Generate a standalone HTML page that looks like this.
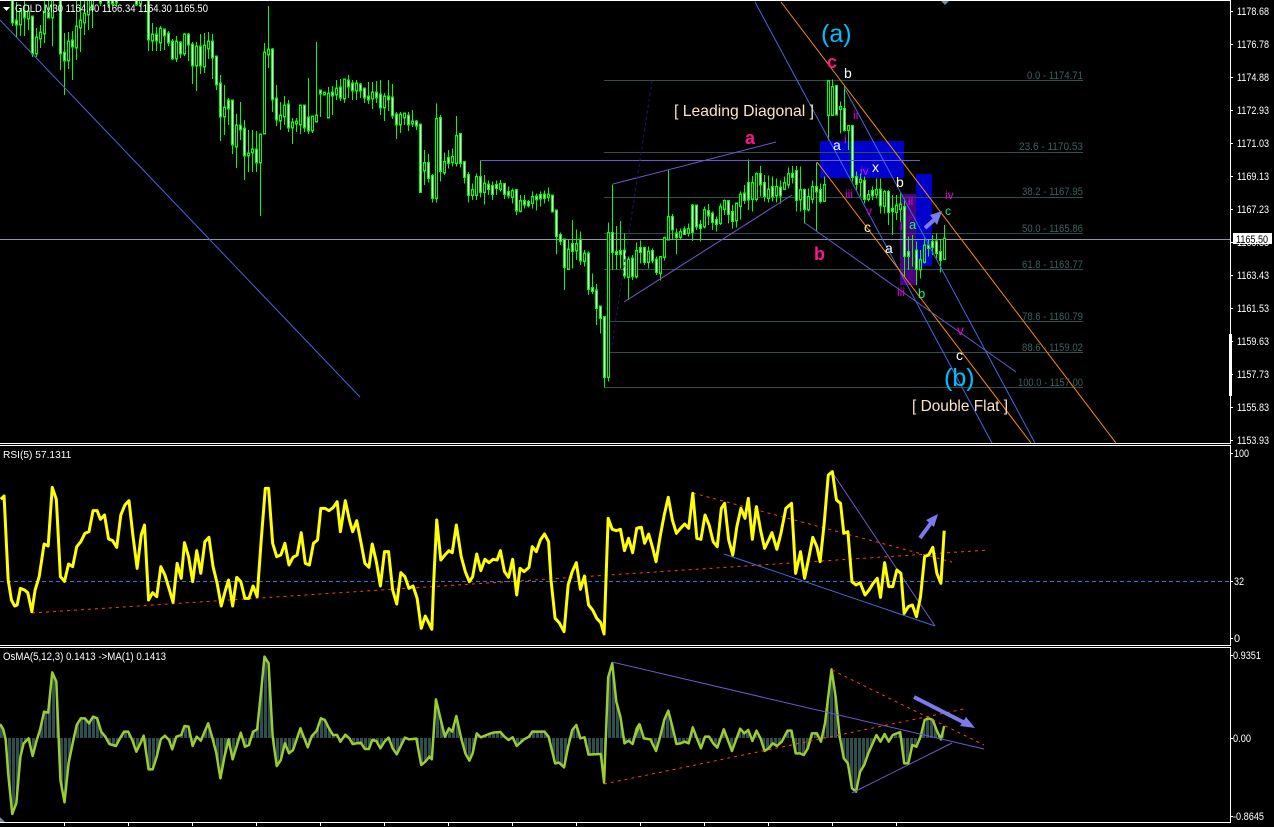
<!DOCTYPE html>
<html><head><meta charset="utf-8"><title>GOLD,M30</title>
<style>
html,body{margin:0;padding:0;background:#000;width:1274px;height:827px;overflow:hidden}
svg{position:absolute;left:0;top:0;display:block}
path,polyline,line,polygon.s{vector-effect:non-scaling-stroke;fill:none}
text{font-family:"Liberation Sans",sans-serif}
.ax{font-size:11px;fill:#fff}
.fb{font-size:11px;fill:#3d5f5f}
.m{font-size:12px;fill:#e000e0}
.w{font-size:14px;fill:#fff}
.g{font-size:13px;fill:#00ff7f}
.p{font-weight:bold;fill:#ff1493}
.bl{font-size:25px;fill:#00bfff}
.t{font-size:16px;fill:#ffe4c4}
.c{shape-rendering:crispEdges}
</style></head><body>
<svg width="1274" height="827" viewBox="0 0 1274 827" xmlns="http://www.w3.org/2000/svg">
<defs>
<clipPath id="main"><rect x="0" y="1" width="1230" height="442"/></clipPath>
<pattern id="hb" patternUnits="userSpaceOnUse" width="9.8" height="6" x="0" y="0"><rect x="0" y="0" width="7.35" height="6" fill="#2f4f4f"/></pattern>
<path id="wA" d="M12.5 0V22M16.5 21V24M24.5 12V17M32.5 17V53M48.5 13V17M60.5 0V53M64.5 53V60M72.5 41V46M100.5 0V2M108.5 0V3M112.5 0V3M116.5 0V2M136.5 0V4M148.5 0V39M156.5 35V40M164.5 30V35M168.5 34V42M172.5 42V58M180.5 43V53M188.5 35V44M192.5 45V65M200.5 47V65M212.5 42V57M216.5 57V84M220.5 84V116M228.5 101V108M232.5 101V144M240.5 126V129M244.5 129V155M256.5 150V162M272.5 50V99M276.5 99V119M288.5 105V127M304.5 106V127M308.5 118V130M320.5 91V93M332.5 93V95M340.5 88V97M348.5 81V86M352.5 84V90M360.5 85V90M364.5 89V97M368.5 97V99M376.5 93V97M380.5 95V107M388.5 97V99M392.5 98V115M396.5 115V124M408.5 116V124M416.5 122V125"/>
<path id="bA" d="M20.5 12V24M28.5 12V18M36.5 38V53M40.5 33V38M44.5 13V33M52.5 0V17M68.5 42V60M76.5 27V47M80.5 21V27M84.5 14V22M88.5 0V14M92.5 0V8M140.5 0V3M152.5 35V40M160.5 29V42M176.5 42V58M184.5 35V53M196.5 47V65M204.5 46V66M208.5 42V48M224.5 108V116M236.5 126V146M248.5 154V155M252.5 150V152M260.5 135V162M264.5 53V133M268.5 50V54M280.5 116V120M284.5 106V116M292.5 123V127M296.5 122V123M300.5 106V124M312.5 117V130M316.5 116V121M324.5 93V94M328.5 94V117M336.5 89V94M344.5 80V98M356.5 84V90M372.5 93V98M384.5 97V107M400.5 115V124M404.5 114V117M412.5 122V123"/>
<path id="wB" d="M420.5 195V395M428.5 310V352M432.5 350V412M440.5 175V332M448.5 295V308M460.5 223V307M464.5 307V350M468.5 347V404M480.5 352V395M488.5 375V385M492.5 380V400M496.5 376V382M504.5 373V400M508.5 398V405M516.5 392V450M524.5 425V432M528.5 428V435M536.5 411V417M540.5 407V414M544.5 405V412M552.5 408V453M556.5 453V527M560.5 527V542M564.5 540V620M572.5 553V572M580.5 540V600M588.5 582V685M592.5 685V692M596.5 693V742M600.5 741V773M604.5 772V950M612.5 520V575M616.5 578V580M620.5 575V580M624.5 573V645M632.5 597V648M640.5 565V575M644.5 565V605M652.5 575V600M656.5 600V635M672.5 472V507M676.5 522V530M684.5 510V520M692.5 438V515M696.5 438V498M700.5 497V502M708.5 454V465M712.5 462V485M716.5 482V490M728.5 424V460M732.5 458V482M744.5 402V418M748.5 370V417M760.5 343V372M764.5 370V407M772.5 382V408M780.5 384V405M792.5 343V350M796.5 335V418M804.5 392V445M816.5 383V393M820.5 392V422"/>
<path id="bB" d="M424.5 310V330M436.5 178V412M444.5 307V336M452.5 292V305M456.5 230V308M472.5 391V403M476.5 352V403M484.5 372V395M500.5 373V385M512.5 395V409M520.5 424V452M532.5 412V427M548.5 405V410M568.5 570V625M576.5 553V570M584.5 582V602M608.5 520V950M628.5 600V650M636.5 575V648M648.5 576V605M660.5 592V638M664.5 535V590M668.5 472V537M680.5 518V530M688.5 508V518M704.5 452V498M720.5 442V488M724.5 424V446M736.5 432V480M740.5 405V437M752.5 370V415M756.5 343V415M768.5 390V412M776.5 382V405M784.5 370V386M788.5 343V372M800.5 392V417M808.5 412V447M812.5 382V415M824.5 377V422"/>
<path id="wC" d="M836.5 260V342M844.5 328V388M852.5 380V530M856.5 533V550M864.5 545V595M872.5 575V585M880.5 570V615M888.5 577V635M892.5 628V632"/>
<path id="bC" d="M828.5 245V343M832.5 262V343M840.5 322V326M848.5 380V388M860.5 540V545M868.5 586V596M876.5 572V582M884.5 578V617M896.5 618V635M900.5 615V625"/>
<path id="wD" d="M904.5 113V257M908.5 248V257M916.5 243V295M928.5 228V232M932.5 218V230M936.5 216V248M940.5 248V268"/>
<path id="bD" d="M920.5 272V297M924.5 228V275"/>
<path id="bE" d="M944.5 207V265"/>
</defs>

<rect width="1274" height="827" fill="#000"/>

<!-- main chart -->
<g clip-path="url(#main)">
<g class="c">
<rect x="820" y="141" width="84" height="37" fill="#0000cd"/>
<rect x="916" y="174" width="16" height="92" fill="#0000cd"/>
<rect x="900" y="194" width="16" height="91" fill="#4b0082"/>
</g>
<g stroke="#2f4f4f" stroke-width="1" class="c">
<line x1="604" y1="80.5" x2="1083" y2="80.5"/>
<line x1="604" y1="152.5" x2="1083" y2="152.5"/>
<line x1="604" y1="197.5" x2="1083" y2="197.5"/>
<line x1="604" y1="233.5" x2="1083" y2="233.5"/>
<line x1="604" y1="269.5" x2="1083" y2="269.5"/>
<line x1="610" y1="321.5" x2="1083" y2="321.5"/>
<line x1="610" y1="352.5" x2="1083" y2="352.5"/>
<line x1="604" y1="387.5" x2="1083" y2="387.5"/>
</g>
<line x1="0" y1="239.5" x2="1230" y2="239.5" stroke="#8a9aaa" class="c"/>

<!-- candles -->
<g class="c">
<path fill="none" stroke="#0f0" d="M12.5 0V26M16.5 2V37M20.5 8V36M24.5 0V36M28.5 5V30M32.5 17V57M36.5 28V57M40.5 25V48M44.5 0V43M48.5 0V18M52.5 0V46M60.5 0V70M64.5 33V95M68.5 32V69M72.5 31V80M76.5 0V60M80.5 0V52M84.5 0V35M88.5 0V30M92.5 0V28M100.5 0V6M108.5 0V8M112.5 0V6M116.5 0V7M136.5 0V6M140.5 0V7M148.5 0V51M152.5 23V51M156.5 27V51M160.5 26V51M164.5 29V50M168.5 31V46M172.5 39V60M176.5 36V62M180.5 41V58M184.5 33V56M188.5 33V61M192.5 42V84M196.5 42V91M200.5 34V74M204.5 33V73M208.5 32V59M212.5 34V79M216.5 56V90M220.5 75V141M224.5 85V135M228.5 98V125M232.5 100V154M236.5 114V168M240.5 102V140M244.5 120V180M248.5 130V172M252.5 130V172M256.5 131V172M260.5 135V216M264.5 43V133M268.5 6V68M272.5 48V112M276.5 85V126M280.5 102V130M284.5 96V125M288.5 100V132M292.5 118V144M296.5 118V132M300.5 105V134M304.5 105V132M308.5 78V134M312.5 116V133M316.5 42V121M320.5 91V117M328.5 87V117M332.5 86V115M336.5 80V100M340.5 79V101M344.5 80V103M348.5 75V98M352.5 80V100M356.5 80V100M360.5 83V98M364.5 88V103M368.5 82V104M372.5 82V109M376.5 81V103M380.5 80V115M384.5 93V121M388.5 80V111M392.5 84V119M396.5 112V139M400.5 112V133M404.5 113V125M408.5 112V131M412.5 110V127M416.5 120V130"/>
<g transform="translate(0,60) scale(1,.33333)">
<path fill="none" stroke="#0f0" d="M420.5 195V395M424.5 270V375M428.5 282V367M432.5 342V428M436.5 130V428M440.5 165V365M444.5 277V345M448.5 270V325M452.5 265V320M456.5 168V320M460.5 222V322M464.5 307V370M468.5 336V428M472.5 370V420M476.5 340V420M480.5 300V412M484.5 345V433M488.5 362V405M492.5 365V420M496.5 362V405M500.5 360V395M504.5 372V417M508.5 380V415M512.5 385V430M516.5 392V465M520.5 405V458M524.5 405V445M528.5 420V442M532.5 395V445M536.5 400V452M540.5 395V440M544.5 392V430M548.5 382V425M552.5 408V453M556.5 452V582M560.5 517V555M564.5 538V690M568.5 540V630M572.5 480V625M576.5 508V600M580.5 515V615M584.5 570V620M588.5 575V705M592.5 640V702M596.5 672V795M600.5 738V820M604.5 770V983M608.5 487V965M612.5 373V630M616.5 498V628M620.5 483V625M624.5 520V655M628.5 590V720M632.5 585V660M636.5 548V655M640.5 542V610M644.5 560V615M648.5 560V625M652.5 565V610M656.5 590V645M660.5 590V662M664.5 530V602M668.5 330V540M672.5 462V540M676.5 505V582M680.5 505V540M684.5 500V525M688.5 490V530M692.5 432V543M696.5 433V510M700.5 480V545M704.5 440V505M708.5 432V495M712.5 455V510M716.5 470V515M720.5 430V495M724.5 418V465M728.5 420V490M732.5 435V505M736.5 432V503M740.5 395V478M744.5 375V432M748.5 298V450M752.5 348V455M756.5 338V425M760.5 318V410M764.5 345V425M768.5 347V428M772.5 350V425M776.5 355V428M780.5 362V430M784.5 350V390M788.5 322V385M792.5 318V370M796.5 318V455M800.5 320V455M804.5 385V490M808.5 385V455M812.5 362V430M816.5 308V515M820.5 370V430M824.5 350V425"/>
</g>
<g transform="scale(1,.33333)">
<path fill="none" stroke="#0f0" d="M828.5 245V422M832.5 238V345M836.5 255V345M840.5 305V400M844.5 260V395M848.5 380V450M852.5 380V545M856.5 515V570M860.5 520V590M864.5 530V610M868.5 570V605M872.5 560V600M876.5 535V595M880.5 535V640M884.5 570V640M888.5 570V675M892.5 585V705M896.5 585V660M900.5 580V665"/>
</g>
<g transform="translate(0,170) scale(1,.33333)">
<path fill="none" stroke="#0f0" d="M904.5 85V320M908.5 200V300M912.5 195V290M916.5 215V345M920.5 240V325M924.5 205V280M928.5 210V260M932.5 195V255M936.5 190V265M940.5 210V308M944.5 165V270"/>
</g>
<g stroke="#0f0" stroke-width="3" stroke-linecap="square">
<use href="#wA"/><use href="#bA"/>
<g transform="translate(0,60) scale(1,.33333)"><use href="#wB"/><use href="#bB"/></g>
<g transform="scale(1,.33333)"><use href="#wC"/><use href="#bC"/></g>
<g transform="translate(0,170) scale(1,.33333)"><use href="#wD"/><use href="#bD"/><use href="#bE"/></g>
</g>
<g stroke-width="1">
<use href="#wA" stroke="#fff"/><use href="#bA" stroke="#000"/>
<g transform="translate(0,60) scale(1,.33333)"><use href="#wB" stroke="#fff"/><use href="#bB" stroke="#000"/></g>
<g transform="scale(1,.33333)"><use href="#wC" stroke="#fff"/><use href="#bC" stroke="#000"/></g>
<g transform="translate(0,170) scale(1,.33333)"><use href="#wD" stroke="#fff"/><use href="#bD" stroke="#0000cd"/><use href="#bE" stroke="#000"/></g>
</g>
</g>

<!-- trend lines -->
<line x1="0" y1="20" x2="360" y2="397" stroke="#4169e1"/>
<line x1="755" y1="2" x2="992" y2="443" stroke="#4169e1"/>
<line x1="844" y1="87" x2="1035" y2="443" stroke="#4169e1"/>
<line x1="781" y1="2" x2="1116" y2="443" stroke="#ff8c00"/>
<line x1="817" y1="162" x2="1031" y2="443" stroke="#ff8c00"/>
<line x1="480" y1="160.5" x2="920" y2="160.5" stroke="#6a5acd" class="c"/>
<line x1="613" y1="184" x2="776" y2="142" stroke="#6a5acd"/>
<line x1="624" y1="302" x2="792" y2="195" stroke="#6a5acd"/>
<line x1="805" y1="223" x2="1016" y2="372" stroke="#6a5acd"/>
<line x1="612" y1="345" x2="652" y2="81" stroke="#191970" stroke-dasharray="3 3"/>
<line x1="925" y1="228" x2="934" y2="220" stroke="#7b7bee" stroke-width="4"/>
<polygon points="942,211 930,215 937,225" fill="#7b7bee"/>

<!-- fibo labels -->
<text class="fb" x="1027" y="79" textLength="56" lengthAdjust="spacingAndGlyphs">0.0 - 1174.71</text>
<text class="fb" x="1019" y="150" textLength="64" lengthAdjust="spacingAndGlyphs">23.6  - 1170.53</text>
<text class="fb" x="1022" y="195" textLength="61" lengthAdjust="spacingAndGlyphs">38.2 - 1167.95</text>
<text class="fb" x="1022" y="232" textLength="61" lengthAdjust="spacingAndGlyphs">50.0 - 1165.86</text>
<text class="fb" x="1022" y="268" textLength="61" lengthAdjust="spacingAndGlyphs">61.8 - 1163.77</text>
<text class="fb" x="1022" y="320" textLength="61" lengthAdjust="spacingAndGlyphs">78.6 - 1160.79</text>
<text class="fb" x="1022" y="351" textLength="61" lengthAdjust="spacingAndGlyphs">88.6 - 1159.02</text>
<text class="fb" x="1018" y="386" textLength="65" lengthAdjust="spacingAndGlyphs">100.0 - 1157.00</text>

<!-- wave labels -->
<text class="bl" x="821" y="42">(a)</text>
<text class="bl" x="944" y="386">(b)</text>
<text class="p" x="827" y="68" font-size="18">c</text>
<text class="p" x="745" y="144" font-size="18">a</text>
<text class="p" x="814" y="260" font-size="18">b</text>
<text class="w" x="844" y="78">b</text>
<text class="w" x="833" y="150">a</text>
<text class="w" x="872" y="172">x</text>
<text class="w" x="896" y="187">b</text>
<text class="w" x="885" y="253">a</text>
<text x="864" y="232" style="font-size:14px;fill:#ffe4c4">c</text>
<text class="w" x="956" y="360">c</text>
<text class="m" x="853" y="119">ii</text>
<text class="m" x="844" y="143">i</text>
<text class="m" x="860" y="175">iv</text>
<text class="m" x="845" y="198">iii</text>
<text class="m" x="908" y="205">ii</text>
<text class="m" x="945" y="199">iv</text>
<text class="m" x="866" y="215">v</text>
<text class="m" x="900" y="230">i</text>
<text class="m" x="897" y="296">iii</text>
<text class="m" x="957" y="335" style="font-size:14px">v</text>
<text class="g" x="945" y="215" style="font-size:12px">c</text>
<text class="g" x="909" y="229">a</text>
<text class="g" x="918" y="298">b</text>
<text class="t" x="674" y="116" textLength="140" lengthAdjust="spacingAndGlyphs">[ Leading Diagonal ]</text>
<text class="t" x="912" y="411" textLength="96" lengthAdjust="spacingAndGlyphs">[ Double Flat ]</text>
</g>

<!-- header -->
<polygon points="3,7 10,7 6.5,11" fill="#fff"/>
<text x="15" y="12" textLength="193" lengthAdjust="spacingAndGlyphs" style="font-size:11px;fill:#fff">GOLD,M30  1164.40 1166.34 1164.30 1165.50</text>
<polygon points="940,0 950,0 945,5" fill="#778899"/>

<!-- RSI -->
<line x1="0" y1="581.5" x2="1230" y2="581.5" stroke="#4169e1" stroke-dasharray="4 3" class="c"/>
<g stroke="#ff4500" stroke-dasharray="3 4">
<line x1="32" y1="613" x2="989" y2="550"/>
<line x1="693" y1="493" x2="952" y2="562"/>
</g>
<line x1="724" y1="554" x2="935" y2="626" stroke="#4169e1"/>
<line x1="832" y1="472" x2="935" y2="626" stroke="#6a5acd"/>
<g transform="translate(0,440) scale(.40816,.33333)" fill="none" stroke="#ff0" stroke-width="3" stroke-linejoin="round">
<polyline style="fill:none" points="2,178 10,168 16,320 20,420 28,480 36,498 42,495 50,445 60,450 68,458 78,515 86,450 96,410 108,312 118,318 128,142 138,178 148,410 158,424 168,372 178,380 188,320 198,305 208,280 218,275 228,212 238,212 246,238 256,225 266,297 276,302 286,322 296,225 306,195 316,182 326,290 336,385 346,285 354,255 364,480 374,458 384,470 394,380 404,405 414,445 424,487 434,370 444,415 452,308 462,350 472,425 482,332 492,400 502,305 512,292 522,380 532,430 542,498 552,452 560,420 570,498 580,412 590,425 600,475 610,475 620,438 630,470 640,300 650,145 658,145 668,310 678,350 688,345 698,310 708,375 718,352 728,345 738,278 748,370 758,375 768,310 778,300 786,205 796,205 806,212 816,203 826,185 834,275 846,182 856,240 864,275 874,242 884,305 894,370 904,382 912,312 922,365 932,438 942,335 952,335 962,450 972,492 982,398 992,410 1002,445 1012,438 1022,475 1032,565 1042,528 1058,568 1062,440 1070,240 1080,360 1090,345 1100,332 1108,338 1118,255 1130,350 1140,395 1150,425 1158,410 1168,342 1178,392 1188,358 1198,368 1208,358 1218,360 1226,332 1236,395 1246,412 1256,358 1266,465 1274,385 1284,395 1296,382 1304,320 1314,335 1324,300 1334,282 1344,305 1350,420 1360,535 1370,548 1382,575 1392,435 1402,395 1412,368 1422,448 1432,408 1442,495 1452,510 1462,535 1472,548 1480,582 1490,235 1500,268 1510,272 1520,268 1530,332 1540,295 1550,338 1560,265 1568,262"/>
</g>
<g transform="translate(634,440) scale(.40816,.33333)" fill="none" stroke="#ff0" stroke-width="3" stroke-linejoin="round">
<polyline style="fill:none" points="10,265 18,262 26,310 36,282 46,325 54,365 64,290 74,225 84,172 94,240 104,280 114,265 124,252 134,265 144,160 154,295 164,298 174,225 184,255 194,305 204,320 214,205 222,190 232,300 242,345 252,260 262,205 272,235 280,175 290,298 300,200 310,270 320,325 330,300 338,278 350,328 360,280 372,205 386,190 396,400 408,335 418,415 428,355 438,292 448,320 456,365 466,250 476,105 486,95 496,180 506,190 514,280 524,275 534,425 544,435 554,428 566,465 576,450 586,430 596,415 604,472 614,368 624,440 634,440 644,390 654,400 662,520 672,500 682,495 692,530 702,470 712,350 722,345 732,322 742,400 752,430 760,272"/>
</g>
<line x1="920" y1="538" x2="931" y2="523" stroke="#7b7bee" stroke-width="4"/>
<polygon points="938,514 926,520 934,527" fill="#7b7bee"/>
<text x="3" y="458" style="font-size:10.2px;fill:#fff">RSI(5) 57.1311</text>

<!-- OsMA -->
<g transform="translate(0,640) scale(.40816,.33333)">
<polygon fill="url(#hb)" points="0,294 0,252 8,268 14,300 20,400 30,522 40,490 50,350 58,310 70,295 80,348 90,300 98,270 108,215 118,218 128,97 138,125 148,420 158,487 168,370 178,310 188,255 198,235 208,235 218,250 228,230 238,235 248,275 258,290 268,312 284,318 294,295 304,275 314,275 324,300 334,335 344,310 352,287 364,388 374,388 384,350 394,298 404,287 414,300 422,328 432,290 444,285 452,258 462,260 472,318 482,290 492,302 510,250 520,292 530,340 540,415 550,350 560,298 570,358 590,278 600,320 610,315 620,275 630,268 640,150 648,50 658,70 668,290 678,378 688,360 698,310 708,340 718,330 736,265 754,322 764,288 776,272 786,235 796,240 806,265 816,285 826,285 834,305 846,284 856,295 864,312 884,308 894,327 904,327 912,300 922,303 932,325 942,305 952,293 962,325 972,343 992,293 1002,298 1020,296 1032,375 1042,365 1052,350 1058,358 1068,178 1080,240 1090,290 1100,265 1108,275 1118,228 1130,295 1140,340 1150,362 1158,340 1168,280 1178,292 1198,282 1208,278 1226,276 1236,290 1246,300 1256,292 1266,318 1284,298 1296,290 1304,275 1334,275 1344,290 1360,370 1370,368 1382,382 1392,320 1402,270 1412,255 1422,295 1432,292 1442,344 1472,342 1480,428 1490,112 1500,70 1510,185 1520,230 1530,310 1540,302 1550,312 1560,265 1568,250 1568,294"/>
<polyline style="fill:none" stroke="#9acd32" stroke-width="2.5" stroke-linejoin="round" points="0,252 8,268 14,300 20,400 30,522 40,490 50,350 58,310 70,295 80,348 90,300 98,270 108,215 118,218 128,97 138,125 148,420 158,487 168,370 178,310 188,255 198,235 208,235 218,250 228,230 238,235 248,275 258,290 268,312 284,318 294,295 304,275 314,275 324,300 334,335 344,310 352,287 364,388 374,388 384,350 394,298 404,287 414,300 422,328 432,290 444,285 452,258 462,260 472,318 482,290 492,302 510,250 520,292 530,340 540,415 550,350 560,298 570,358 590,278 600,320 610,315 620,275 630,268 640,150 648,50 658,70 668,290 678,378 688,360 698,310 708,340 718,330 736,265 754,322 764,288 776,272 786,235 796,240 806,265 816,285 826,285 834,305 846,284 856,295 864,312 884,308 894,327 904,327 912,300 922,303 932,325 942,305 952,293 962,325 972,343 992,293 1002,298 1020,296 1032,375 1042,365 1052,350 1058,358 1068,178 1080,240 1090,290 1100,265 1108,275 1118,228 1130,295 1140,340 1150,362 1158,340 1168,280 1178,292 1198,282 1208,278 1226,276 1236,290 1246,300 1256,292 1266,318 1284,298 1296,290 1304,275 1334,275 1344,290 1360,370 1370,368 1382,382 1392,320 1402,270 1412,255 1422,295 1432,292 1442,344 1472,342 1480,428 1490,112 1500,70 1510,185 1520,230 1530,310 1540,302 1550,312 1560,265 1568,250"/>
</g>
<g transform="translate(634,640) scale(.40816,.33333)">
<polygon fill="url(#hb)" points="0,294 14,254 24,295 40,298 54,333 64,290 74,240 84,212 94,260 104,312 114,310 124,305 134,310 144,262 154,295 164,325 174,290 184,290 194,310 204,323 220,268 240,333 260,266 270,280 280,270 290,303 300,272 310,295 320,333 330,325 340,310 350,318 362,305 376,272 386,272 396,340 406,340 416,345 426,325 436,280 448,280 458,305 468,250 484,88 494,170 504,290 514,355 524,370 534,445 544,455 554,395 564,375 574,340 594,285 604,305 614,282 624,305 634,285 652,276 662,370 672,370 682,315 692,320 702,290 712,240 722,235 732,240 742,272 752,298 760,258 760,294"/>
<polyline style="fill:none" stroke="#9acd32" stroke-width="2.5" stroke-linejoin="round" points="0,295 14,254 24,295 40,298 54,333 64,290 74,240 84,212 94,260 104,312 114,310 124,305 134,310 144,262 154,295 164,325 174,290 184,290 194,310 204,323 220,268 240,333 260,266 270,280 280,270 290,303 300,272 310,295 320,333 330,325 340,310 350,318 362,305 376,272 386,272 396,340 406,340 416,345 426,325 436,280 448,280 458,305 468,250 484,88 494,170 504,290 514,355 524,370 534,445 544,455 554,395 564,375 574,340 594,285 604,305 614,282 624,305 634,285 652,276 662,370 672,370 682,315 692,320 702,290 712,240 722,235 732,240 742,272 752,298 760,258"/>
</g>
<line x1="612" y1="662" x2="984" y2="749" stroke="#6a5acd"/>
<line x1="852" y1="793" x2="952" y2="743" stroke="#6a5acd"/>
<g stroke="#ff4500" stroke-dasharray="3 4">
<line x1="604" y1="784" x2="964" y2="709"/>
<line x1="832" y1="670" x2="984" y2="745"/>
</g>
<line x1="914" y1="697" x2="965" y2="723" stroke="#7b7bee" stroke-width="4"/>
<polygon points="975,728 960,726 966,717" fill="#7b7bee"/>
<text class="ax" x="3" y="660" textLength="163" lengthAdjust="spacingAndGlyphs">OsMA(5,12,3) 0.1413  -&gt;MA(1) 0.1413</text>
<polygon points="0,817 5,822 0,822" fill="#778899"/>

<!-- borders -->
<g fill="#fff" class="c">
<rect x="0" y="0" width="1231" height="1"/>
<rect x="0" y="443" width="1231" height="1"/>
<rect x="0" y="445" width="1231" height="1"/>
<rect x="0" y="645" width="1231" height="1"/>
<rect x="0" y="647" width="1231" height="1"/>
<rect x="0" y="822" width="1231" height="1"/>
<rect x="1230" y="0" width="1" height="444"/>
<rect x="1230" y="445" width="1" height="201"/>
<rect x="1230" y="647" width="1" height="176"/>
<rect x="1229" y="334" width="3" height="62"/>
<path stroke="#fff" d="M1231 11.5h2M1231 44.5h2M1231 77.5h2M1231 110.5h2M1231 143.5h2M1231 176.5h2M1231 209.5h2M1231 242.5h2M1231 275.5h2M1231 308.5h2M1231 341.5h2M1231 374.5h2M1231 407.5h2M1231 440.5h2M1231 453.5h2M1231 581.5h2M1231 638.5h2M1231 655.5h2M1231 738.5h2M1231 816.5h2M64.5 823v3M128.5 823v3M192.5 823v3M256.5 823v3M320.5 823v3M384.5 823v3M448.5 823v3M512.5 823v3M576.5 823v3M640.5 823v3M704.5 823v3M768.5 823v3M832.5 823v3M896.5 823v3"/>
</g>

<!-- axis labels -->
<g class="ax">
<text class="ax" x="1237" y="15" textLength="32" lengthAdjust="spacingAndGlyphs">1178.68</text>
<text class="ax" x="1237" y="48" textLength="32" lengthAdjust="spacingAndGlyphs">1176.78</text>
<text class="ax" x="1237" y="81" textLength="32" lengthAdjust="spacingAndGlyphs">1174.88</text>
<text class="ax" x="1237" y="114" textLength="32" lengthAdjust="spacingAndGlyphs">1172.93</text>
<text class="ax" x="1237" y="147" textLength="32" lengthAdjust="spacingAndGlyphs">1171.03</text>
<text class="ax" x="1237" y="180" textLength="32" lengthAdjust="spacingAndGlyphs">1169.13</text>
<text class="ax" x="1237" y="213" textLength="32" lengthAdjust="spacingAndGlyphs">1167.23</text>
<text class="ax" x="1237" y="246" textLength="32" lengthAdjust="spacingAndGlyphs">1165.33</text>
<text class="ax" x="1237" y="279" textLength="32" lengthAdjust="spacingAndGlyphs">1163.43</text>
<text class="ax" x="1237" y="312" textLength="32" lengthAdjust="spacingAndGlyphs">1161.53</text>
<text class="ax" x="1237" y="345" textLength="32" lengthAdjust="spacingAndGlyphs">1159.63</text>
<text class="ax" x="1237" y="378" textLength="32" lengthAdjust="spacingAndGlyphs">1157.73</text>
<text class="ax" x="1237" y="411" textLength="32" lengthAdjust="spacingAndGlyphs">1155.83</text>
<text class="ax" x="1237" y="444" textLength="32" lengthAdjust="spacingAndGlyphs">1153.93</text>
<rect x="1233" y="233" width="39" height="11" fill="#fff"/>
<text x="1236" y="243" textLength="32" lengthAdjust="spacingAndGlyphs" style="font-size:11px;fill:#000">1165.50</text>
<text class="ax" x="1234" y="457" textLength="15" lengthAdjust="spacingAndGlyphs">100</text>
<text class="ax" x="1234" y="585" textLength="10" lengthAdjust="spacingAndGlyphs">32</text>
<text class="ax" x="1234" y="642">0</text>
<text class="ax" x="1233" y="659" textLength="28" lengthAdjust="spacingAndGlyphs">0.9351</text>
<text class="ax" x="1233" y="742" textLength="18" lengthAdjust="spacingAndGlyphs">0.00</text>
<text class="ax" x="1233" y="820" textLength="31" lengthAdjust="spacingAndGlyphs">-0.8645</text>
</g>
</svg>
</body></html>
